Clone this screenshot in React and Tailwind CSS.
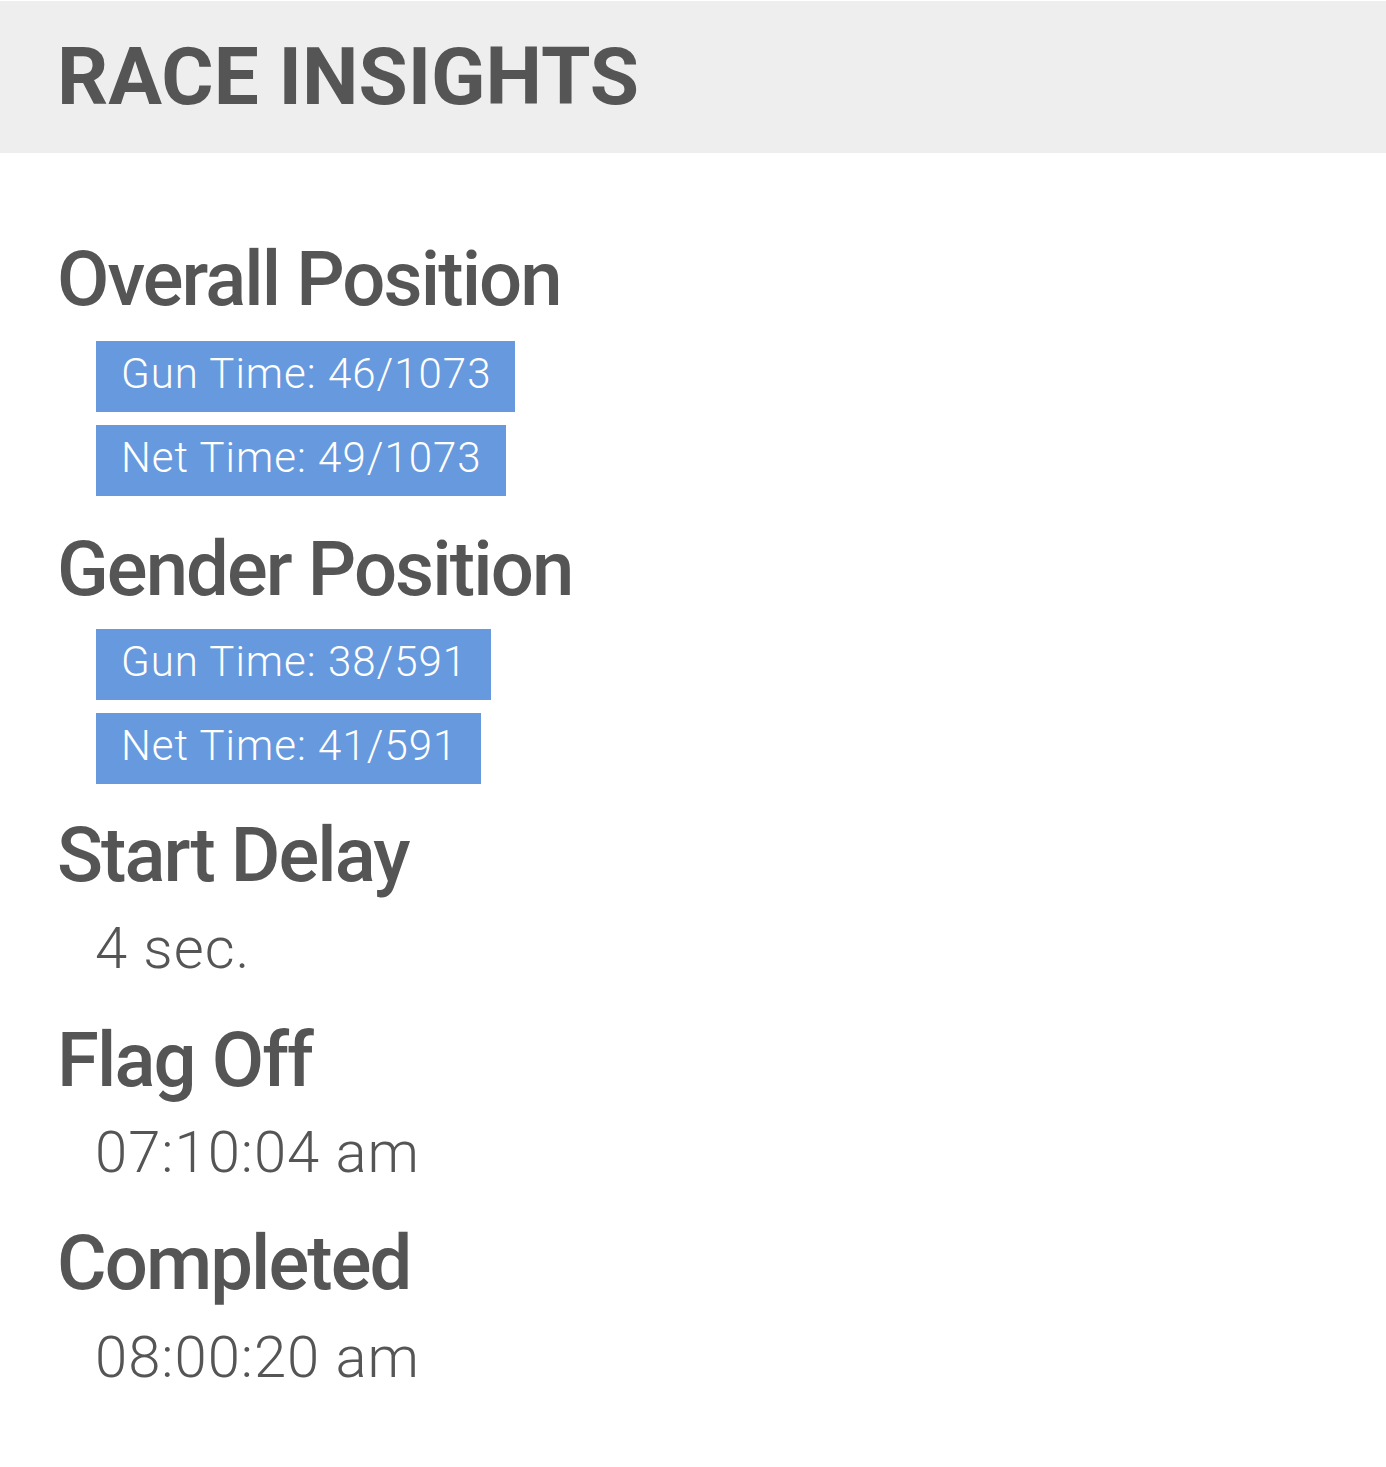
const overall = ["Gun Time: 46/1073", "Net Time: 49/1073"];
const gender = ["Gun Time: 38/591", "Net Time: 41/591"];

function Badge({ children }) {
  return (
    <span className="bg-[#6699dd] text-white font-light text-[42px] tracking-[0.024em] leading-none pt-[12px] pb-[17px] pl-[25px] pr-[24px]">
      {children}
    </span>
  );
}

function Heading({ children, className = "" }) {
  return (
    <h2 className={`text-[76px] leading-[78px] tracking-[-0.025em] font-medium text-[#555555] ${className}`}>
      {children}
    </h2>
  );
}

function Value({ children, className = "" }) {
  return (
    <p className={`ml-[38px] text-[58px] leading-none tracking-[0.017em] font-light text-[#555555] ${className}`}>
      {children}
    </p>
  );
}

export default function App() {
  return (
    <div className="w-[1386px] min-h-[1467px] bg-white font-['Roboto',sans-serif]">
      <header className="mt-px h-[152px] bg-[#eeeeee] flex items-center pl-[57px]">
        <h1 className="text-[80px] leading-none font-bold text-[#555555]">RACE INSIGHTS</h1>
      </header>

      <main className="pt-[87px] px-[57px]">
        <section>
          <Heading>Overall Position</Heading>
          <div className="mt-[23px] ml-[39px] flex flex-col items-start gap-[13px]">
            {overall.map((t) => (
              <Badge key={t}>{t}</Badge>
            ))}
          </div>
        </section>

        <section className="mt-[34px]">
          <Heading>Gender Position</Heading>
          <div className="mt-[21px] ml-[39px] flex flex-col items-start gap-[13px]">
            {gender.map((t) => (
              <Badge key={t}>{t}</Badge>
            ))}
          </div>
        </section>

        <section className="mt-[32px]">
          <Heading>Start Delay</Heading>
          <Value className="mt-[25px]">4 sec.</Value>
        </section>

        <section className="mt-[44px]">
          <Heading>Flag Off</Heading>
          <Value className="mt-[24px]">07:10:04 am</Value>
        </section>

        <section className="mt-[43px]">
          <Heading>Completed</Heading>
          <Value className="mt-[26px]">08:00:20 am</Value>
        </section>
      </main>
    </div>
  );
}
